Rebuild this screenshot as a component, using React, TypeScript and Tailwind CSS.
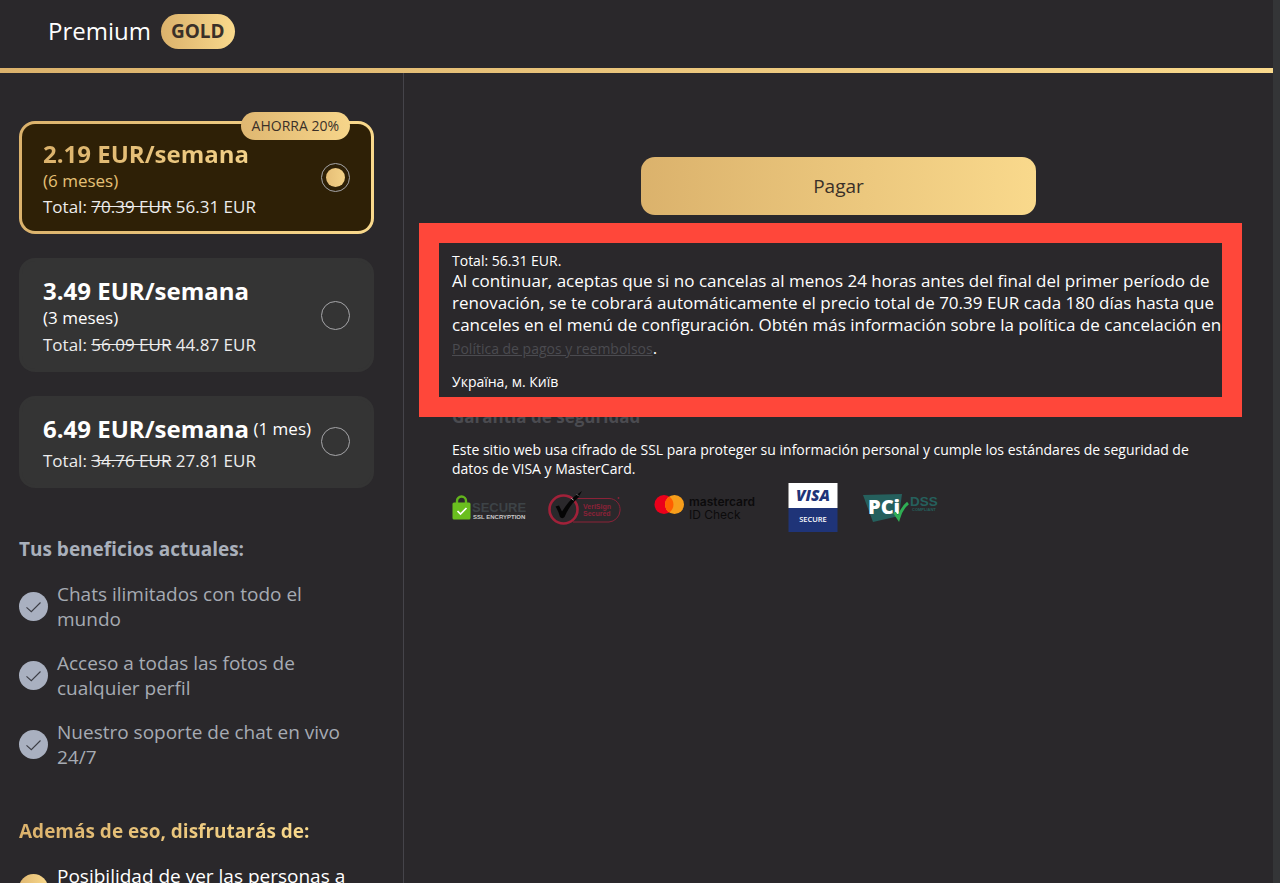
import { useState } from "react";
import clsx from "clsx";

type Plan = { id: string; price: string; period: string; old: string; total: string; badge?: string };

const plans: Plan[] = [
    { id: "6m", price: "2.19 EUR/semana", period: "(6 meses)", old: "70.39 EUR", total: "56.31 EUR", badge: "AHORRA 20%" },
    { id: "3m", price: "3.49 EUR/semana", period: "(3 meses)", old: "56.09 EUR", total: "44.87 EUR" },
    { id: "1m", price: "6.49 EUR/semana", period: "(1 mes)", old: "34.76 EUR", total: "27.81 EUR" },
];

const currentBenefits = [
    "Chats ilimitados con todo el mundo",
    "Acceso a todas las fotos de cualquier perfil",
    "Nuestro soporte de chat en vivo 24/7",
];

const goldBenefits = ["Posibilidad de ver las personas a"];

function PlanCard({ plan, selected, onSelect }: { plan: Plan; selected: boolean; onSelect: () => void }) {
    return (
        <label
            className={clsx(
                "relative block cursor-pointer rounded-2xl p-[3px]",
                selected ? "bg-linear-to-r from-[#dbb26c] to-[#f9d98c]" : "bg-[#343434]"
            )}
        >
            {plan.badge && (
                <span className="absolute right-6 -top-[9px] rounded-full bg-linear-to-r from-[#dfb771] to-[#f6d58a] px-[11px] text-sm leading-7 text-[#3a3028]">
                    {plan.badge}
                </span>
            )}
            <span
                className={clsx(
                    "flex items-center rounded-[13px] px-[21px] py-[13px]",
                    selected ? "bg-[#2e2006]" : "bg-[#343434]"
                )}
            >
                <span className="flex-1 text-[17px] leading-[22px]">
                    <span className={clsx("block leading-5", selected && "text-[#e5c176]")}>
                        <span
                            className={clsx(
                                "align-middle text-2xl leading-[33px] font-bold",
                                selected && "bg-linear-to-r from-[#dbb26c] to-[#f3d188] bg-clip-text text-transparent"
                            )}
                        >
                            {plan.price}
                        </span>{" "}
                        <span className="align-middle whitespace-nowrap">{plan.period}</span>
                    </span>
                    <span className="mt-[5px] block text-[#ececec]">
                        Total: <s>{plan.old}</s> {plan.total}
                    </span>
                </span>
                <input
                    type="radio"
                    name="plan"
                    checked={selected}
                    onChange={onSelect}
                    className="size-[29px] shrink-0 appearance-none rounded-full border border-[#a5a5a8] bg-clip-content p-1 checked:bg-linear-to-r checked:from-[#e3bb74] checked:to-[#f6d58a]"
                />
            </span>
        </label>
    );
}

function Benefit({ text, gold }: { text: string; gold?: boolean }) {
    return (
        <li className="flex min-h-[50px] items-center gap-[9px]">
            <svg viewBox="0 0 29 29" className="size-[29px] shrink-0">
                <defs>
                    <linearGradient id="goldDot">
                        <stop offset="0" stopColor="#dfb771" />
                        <stop offset="1" stopColor="#f9d98c" />
                    </linearGradient>
                </defs>
                <circle cx="14.5" cy="14.5" r="14.5" fill={gold ? "url(#goldDot)" : "#a9b0c0"} />
                <path d="M7.5 15.3l4.8 4.4 9.2-9.2" fill="none" stroke="#3c3d45" strokeWidth="1.1" />
            </svg>
            <span className={clsx("self-start", gold ? "text-white" : "text-[#a6abb3]")}>{text}</span>
        </li>
    );
}

function SslLogo() {
    return (
        <svg viewBox="0 0 74 28" className="h-7 w-[74px]" role="img" aria-label="Secure SSL encryption">
            <path d="M5 11V7a4.500 4.500 0 0 1 9 0v4" fill="none" stroke="#62b41c" strokeWidth="2.4" />
            <rect x="0.500" y="8.500" width="18" height="17" rx="1.500" fill="#6abf1f" />
            <path d="M5.500 17l3 3 6-6" fill="none" stroke="#fff" strokeWidth="1.700" />
            <text x="20" y="18" fontSize="13" fontWeight="700" fill="#3d4347" fontFamily="Liberation Sans, sans-serif">SECURE</text>
            <text x="21" y="25" fontSize="6" fontWeight="700" fill="#c9c9c9" fontFamily="Liberation Sans, sans-serif">SSL ENCRYPTION</text>
        </svg>
    );
}

function VerisignLogo() {
    return (
        <svg viewBox="0 0 74 38" className="h-[38px] w-[74px]" role="img" aria-label="VeriSign Secured">
            <path d="M27 9.500h34a11 11 0 0 1 11 12.500 12 12 0 0 1-11 11H25" fill="none" stroke="#8c2238" strokeWidth="1" />
            <circle cx="15.500" cy="20.500" r="14" fill="none" stroke="#a12139" strokeWidth="2.600" />
            <path d="M7.500 17.500l3.500-1 3 6c4-6 8-11.500 13-15.500l7-5-4 7c-6 5-10 11-13.500 19-1 1.500-3.500 1.500-4.500 0-1-4-2.500-7.500-4.500-10.500z" fill="#050505" />
            <path d="M23.500 9.500l2 1.500M29 5.500l1 1" stroke="#ddd" strokeWidth="0.900" />
            <text x="35" y="19.500" fontSize="7" fontWeight="700" fill="#8c2238" fontFamily="Liberation Sans, sans-serif">VeriSign</text>
            <text x="35" y="26.500" fontSize="7" fontWeight="700" fill="#8c2238" fontFamily="Liberation Sans, sans-serif">Secured</text>
            <circle cx="70.500" cy="9" r="0.900" fill="#8c2238" />
        </svg>
    );
}

function MastercardLogo() {
    return (
        <svg viewBox="0 0 104 28" className="h-7 w-[104px]" role="img" aria-label="Mastercard ID Check">
            <circle cx="10" cy="10.500" r="9.500" fill="#eb001b" />
            <circle cx="20.500" cy="10.500" r="9.500" fill="#f79e1b" />
            <path d="M15.250 2.600a9.500 9.500 0 0 1 0 15.800 9.500 9.500 0 0 1 0-15.800z" fill="#ff5f00" />
            <text x="35" y="12" fontSize="12" fontWeight="600" fill="#0c0b0c" fontFamily="Inter, sans-serif">mastercard</text>
            <text x="35" y="25" fontSize="12" fill="#0c0b0c" fontFamily="Inter, sans-serif">ID Check</text>
        </svg>
    );
}

function VisaLogo() {
    return (
        <svg viewBox="0 0 50 49" className="h-[49px] w-[50px]" role="img" aria-label="Visa Secure">
            <rect x="0.500" width="49" height="25" fill="#fff" />
            <rect x="0.500" y="25" width="49" height="24" fill="#1f3478" />
            <text x="25" y="18" fontSize="15.500" fontWeight="800" fontStyle="italic" fill="#1f3478" textAnchor="middle">VISA</text>
            <text x="25" y="38.500" fontSize="7.500" fontWeight="600" fill="#fff" textAnchor="middle">SECURE</text>
        </svg>
    );
}

function PciLogo() {
    return (
        <svg viewBox="0 0 78 30" className="h-[30px] w-[78px]" role="img" aria-label="PCI DSS Compliant">
            <path d="M1 2l39-1-3 22-26 6z" fill="#25605d" />
            <text x="6" y="21" fontSize="20" fontWeight="800" fill="#fff">PCi</text>
            <path d="M32.500 19.500l4 6c2-7 5-12 9.500-15.500" fill="none" stroke="#2fae54" strokeWidth="3" />
            <text x="48" y="13" fontSize="13.500" fontWeight="700" fill="#25605d" fontFamily="Liberation Sans, sans-serif">DSS</text>
            <text x="50" y="18" fontSize="4" fontWeight="700" fill="#25605d" fontFamily="Liberation Sans, sans-serif">COMPLIANT</text>
        </svg>
    );
}

export default function App() {
    const [planId, setPlanId] = useState("6m");

    return (
        <div className="flex h-screen overflow-hidden bg-[#343537] font-['Open_Sans','Noto_Sans',sans-serif] text-white">
            <div className="flex min-w-0 flex-1 flex-col bg-[#2a282b]">
                <header>
                    <div className="flex h-[68px] items-center gap-[10px] pb-[6px] pl-12">
                        <h1 className="text-2xl">Premium</h1>
                        <span className="rounded-full bg-linear-to-r from-[#dbb26c] to-[#f9d98c] px-[10px] text-[19px] leading-[35px] font-bold text-[#3a3028]">
                            GOLD
                        </span>
                    </div>
                    <div className="h-[5px] bg-linear-to-r from-[#dbb26c] to-[#f9d98c]" />
                </header>

                <div className="flex min-h-0 flex-1">
                    {/* Plans and benefits */}
                    <aside className="w-[404px] shrink-0 overflow-hidden border-r border-[#45444a] pt-12 pr-[29px] pl-[19px]">
                        <div className="space-y-6">
                            {plans.map((plan) => (
                                <PlanCard
                                    key={plan.id}
                                    plan={plan}
                                    selected={plan.id === planId}
                                    onSelect={() => setPlanId(plan.id)}
                                />
                            ))}
                        </div>

                        <div className="pr-4 text-[19px] leading-[25px]">
                            <h2 className="mt-[49px] font-bold text-[#a9b0bb]">Tus beneficios actuales:</h2>
                            <ul className="mt-5 space-y-[19px]">
                                {currentBenefits.map((text) => (
                                    <Benefit key={text} text={text} />
                                ))}
                            </ul>

                            <h2 className="mt-[49px] w-fit bg-linear-to-r from-[#dbb26c] to-[#f9d98c] bg-clip-text font-bold text-transparent">
                                Además de eso, disfrutarás de:
                            </h2>
                            <ul className="mt-5 space-y-[19px]">
                                {goldBenefits.map((text) => (
                                    <Benefit key={text} text={text} gold />
                                ))}
                            </ul>
                        </div>
                    </aside>

                    {/* Payment */}
                    <main className="min-w-0 flex-1 px-12 pt-[84px]">
                        <button className="mx-auto block h-[58px] w-full max-w-[395px] rounded-[14px] bg-linear-to-r from-[#dbb26c] to-[#f9d98c] text-[19px] text-[#3a3028]">
                            Pagar
                        </button>

                        <section className="relative mt-9">
                            <div className="pointer-events-none absolute -top-7 -right-[17px] -bottom-[25px] -left-[33px] border-[20px] border-[#ff473a]" />
                            <p className="text-sm leading-[19px]">Total: 56.31 EUR.</p>
                            <p className="text-[17px] leading-[22px]">
                                Al continuar, aceptas que si no cancelas al menos 24 horas antes del final del primer período de
                                renovación, se te cobrará automáticamente el precio total de 70.39 EUR cada 180 días hasta que
                                canceles en el menú de configuración. Obtén más información sobre la política de cancelación en{" "}
                                <a href="#" className="text-sm leading-[26px] text-[#4b4b50] underline">
                                    Política de pagos y reembolsos
                                </a>
                                .
                            </p>
                            <p className="mt-[10px] text-sm leading-5">Україна, м. Київ</p>
                        </section>

                        <section>
                            <h3 className="mt-[14px] text-[17px] leading-[22px] font-bold text-[#4b4b50]">Garantía de seguridad</h3>
                            <p className="mt-3 text-sm leading-[19px]">
                                Este sitio web usa cifrado de SSL para proteger su información personal y cumple los estándares de
                                seguridad de datos de VISA y MasterCard.
                            </p>
                            <div className="mt-[5px] flex items-center">
                                <SslLogo />
                                <div className="ml-[22px]"><VerisignLogo /></div>
                                <div className="ml-8"><MastercardLogo /></div>
                                <div className="ml-[30px]"><VisaLogo /></div>
                                <div className="ml-6"><PciLogo /></div>
                            </div>
                        </section>
                    </main>
                </div>
            </div>
            <div className="w-[7px] shrink-0" />
        </div>
    );
}
